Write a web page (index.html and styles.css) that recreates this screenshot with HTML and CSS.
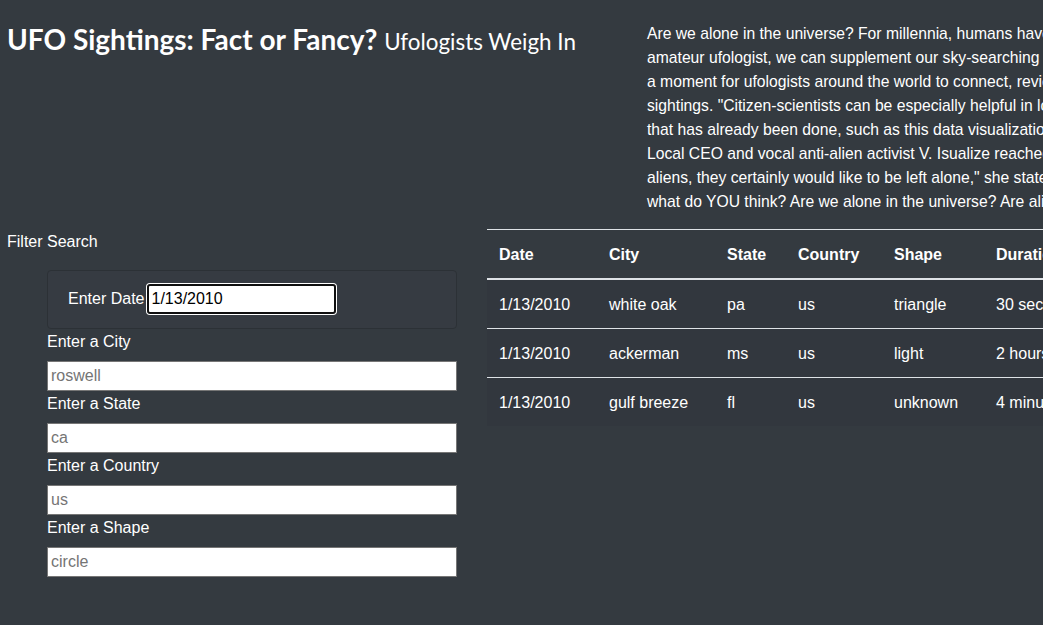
FILE: index.html
```html
<!DOCTYPE html>
<html lang="en">
<head>
<meta charset="utf-8">
<title>UFO Sightings</title>
<link rel="stylesheet" href="styles.css">
</head>
<body>
<div class="page">
  <header class="top">
    <h1 class="title">UFO Sightings: Fact or Fancy? <small class="subtitle">Ufologists Weigh In</small></h1>
    <p class="intro">Are we alone in the universe? For millennia, humans have gazed at the stars and wondered. As an<br>amateur ufologist, we can supplement our sky-searching with data. Today is<br>a moment for ufologists around the world to connect, review, and analyze<br>sightings. "Citizen-scientists can be especially helpful in looking at work<br>that has already been done, such as this data visualization," said one expert.<br>Local CEO and vocal anti-alien activist V. Isualize reached a different conclusion: "If there are<br>aliens, they certainly would like to be left alone," she stated. So,<br>what do YOU think? Are we alone in the universe? Are aliens among us?</p>
  </header>
  <main class="content">
    <aside class="filters">
      <div class="filters-title">Filter Search</div>
      <form class="filter-form">
        <div class="date-box">
          <label class="date-label" for="datetime">Enter Date</label>
          <input class="date-input" id="datetime" type="text" value="1/13/2010">
        </div>
        <label class="field-label" for="city">Enter a City</label>
        <input class="field-input" id="city" type="text" placeholder="roswell">
        <label class="field-label" for="state">Enter a State</label>
        <input class="field-input" id="state" type="text" placeholder="ca">
        <label class="field-label" for="country">Enter a Country</label>
        <input class="field-input" id="country" type="text" placeholder="us">
        <label class="field-label" for="shape">Enter a Shape</label>
        <input class="field-input" id="shape" type="text" placeholder="circle">
      </form>
    </aside>
    <section class="results">
      <table class="ufo-table">
        <thead>
          <tr>
            <th class="c-date">Date</th>
            <th class="c-city">City</th>
            <th class="c-state">State</th>
            <th class="c-country">Country</th>
            <th class="c-shape">Shape</th>
            <th class="c-duration">Duration</th>
            <th class="c-comments">Comments</th>
          </tr>
        </thead>
        <tbody>
          <tr>
            <td>1/13/2010</td><td>white oak</td><td>pa</td><td>us</td><td>triangle</td><td>30 seconds</td><td>Three lights in a triangle formation moving slowly.</td>
          </tr>
          <tr>
            <td>1/13/2010</td><td>ackerman</td><td>ms</td><td>us</td><td>light</td><td>2 hours</td><td>Bright light hovering over the trees.</td>
          </tr>
          <tr>
            <td>1/13/2010</td><td>gulf breeze</td><td>fl</td><td>us</td><td>unknown</td><td>4 minutes</td><td>Strange object seen over the bay.</td>
          </tr>
        </tbody>
      </table>
    </section>
  </main>
</div>
</body>
</html>
```
FILE: styles.css
```css
html, body {
  margin: 0;
  padding: 0;
  background: #343a40;
  overflow: hidden;
}
body {
  color: #ffffff;
  font-family: "Liberation Sans", Arial, sans-serif;
  font-size: 16px;
  line-height: 24px;
  width: 1043px;
  height: 625px;
}
.page {
  width: 1043px;
  overflow: hidden;
}
.top {
  display: flex;
  padding-top: 22px;
}
.title {
  flex: 0 0 647px;
  margin: 0;
  padding-left: 7px;
  box-sizing: border-box;
  font-family: Lato, "Liberation Sans", sans-serif;
  font-size: 28px;
  font-weight: 700;
  line-height: 34px;
}
.subtitle {
  font-size: 22.4px;
  font-weight: 400;
}
.intro {
  margin: 0 0 15px 0;
  white-space: nowrap;
  flex: 0 0 auto;
  font-size: 15.7px;
}
.content {
  display: flex;
  align-items: flex-start;
}
.filters {
  flex: 0 0 487px;
}
.filters-title {
  padding-left: 7px;
  padding-top: 1px;
  margin-bottom: 16px;
}
.filter-form {
  margin-left: 47px;
  width: 410px;
  display: flex;
  flex-direction: column;
  align-items: stretch;
}
.date-box {
  display: flex;
  align-items: center;
  padding: 13px 20px 14px 20px;
  border: 1px solid #2c3136;
  border-radius: 4px;
  background: #363b42;
}
.date-label {
  margin-right: 3px;
}
.date-input {
  width: 189px;
  height: 30px;
  box-sizing: border-box;
  border: 2px solid #101010;
  border-radius: 3px;
  box-shadow: 0 0 0 1px #ffffff;
  background: #ffffff;
  color: #000000;
  font: 16px "Liberation Sans", Arial, sans-serif;
  padding: 1px 2px;
  outline: none;
}
.field-label {
  display: block;
  padding-top: 1px;
  margin-bottom: 7px;
}
.field-input {
  display: block;
  height: 30px;
  box-sizing: border-box;
  border: 1px solid #767676;
  background: #ffffff;
  color: #000000;
  font: 16px "Liberation Sans", Arial, sans-serif;
  padding: 1px 3px;
}
.field-input::placeholder {
  color: #757575;
}
.results {
  flex: 0 0 auto;
}
.ufo-table {
  border-collapse: collapse;
  white-space: nowrap;
}
.ufo-table th,
.ufo-table td {
  text-align: left;
  padding: 13px 12px 11px 12px;
  border-top: 1px solid #dee2e6;
  vertical-align: top;
}
.ufo-table th {
  font-weight: 700;
  border-bottom: 2px solid #dee2e6;
}
.ufo-table tbody tr {
  background: #32373e;
}
.c-date { width: 86px; }
.c-city { width: 94px; }
.c-state { width: 47px; }
.c-country { width: 72px; }
.c-shape { width: 78px; }
.c-duration { width: 100px; }
```
